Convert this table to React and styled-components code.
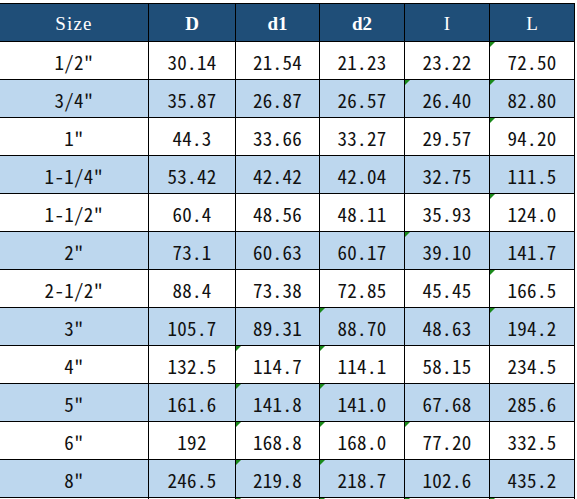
import React from "react";
import styled, { createGlobalStyle } from "styled-components";

const GlobalStyle = createGlobalStyle`
  html, body {
    margin: 0;
    padding: 0;
    background: #ffffff;
  }
  body {
    width: 577px;
    height: 499px;
    overflow: hidden;
  }
`;

const Page = styled.div`
  width: 577px;
  height: 499px;
  padding-top: 3px;
  box-sizing: border-box;
  overflow: hidden;
`;

const Grid = styled.div`
  display: grid;
  grid-template-columns: 148px 86px 83px 84px 84px 84px;
  grid-auto-rows: 37px;
  gap: 1px;
  width: max-content;
  margin-left: -1px;
  border: 1px solid #000;
  background: #000;
`;

const HeadCell = styled.div`
  display: flex;
  align-items: center;
  justify-content: center;
  padding-top: 3px;
  box-sizing: border-box;
  background: #1f4e78;
  color: #ffffff;
  font-family: "Liberation Serif", "Times New Roman", serif;
  font-size: 19px;
  font-weight: ${(p) => (p.bold ? 700 : 400)};
  letter-spacing: ${(p) => (p.wide ? "1.2px" : "0")};
`;

const Cell = styled.div`
  position: relative;
  display: flex;
  align-items: center;
  justify-content: center;
  padding-top: 2px;
  box-sizing: border-box;
  background: ${(p) => (p.shaded ? "#bdd7ee" : "#ffffff")};
  color: #111;
  font-family: "Noto Sans Mono CJK SC", "Liberation Mono", monospace;
  font-size: 19px;
  letter-spacing: 0.3px;

  &::before {
    content: "";
    display: ${(p) => (p.flag ? "block" : "none")};
    position: absolute;
    top: 0;
    left: 0;
    width: 0;
    height: 0;
    border-top: 5px solid #1a8a1a;
    border-right: 5px solid transparent;
  }
`;

const headers = [
  { label: "Size", wide: true },
  { label: "D", bold: true },
  { label: "d1", bold: true },
  { label: "d2", bold: true },
  { label: "I" },
  { label: "L" },
];

// flags = column indexes that carry the green corner marker
const rows = [
  { v: ['1/2"', "30.14", "21.54", "21.23", "23.22", "72.50"], flags: [5] },
  { v: ['3/4"', "35.87", "26.87", "26.57", "26.40", "82.80"], flags: [4, 5] },
  { v: ['1"', "44.3", "33.66", "33.27", "29.57", "94.20"], flags: [5] },
  { v: ['1-1/4"', "53.42", "42.42", "42.04", "32.75", "111.5"], flags: [] },
  { v: ['1-1/2"', "60.4", "48.56", "48.11", "35.93", "124.0"], flags: [5] },
  { v: ['2"', "73.1", "60.63", "60.17", "39.10", "141.7"], flags: [4] },
  { v: ['2-1/2"', "88.4", "73.38", "72.85", "45.45", "166.5"], flags: [5] },
  { v: ['3"', "105.7", "89.31", "88.70", "48.63", "194.2"], flags: [3, 5] },
  { v: ['4"', "132.5", "114.7", "114.1", "58.15", "234.5"], flags: [2, 3] },
  { v: ['5"', "161.6", "141.8", "141.0", "67.68", "285.6"], flags: [2, 3] },
  { v: ['6"', "192", "168.8", "168.0", "77.20", "332.5"], flags: [2, 3, 4] },
  { v: ['8"', "246.5", "219.8", "218.7", "102.6", "435.2"], flags: [2, 3] },
  // next sheet row, only its top edge shows at the bottom of the view
  { v: ["", "", "", "", "", ""], flags: [2, 3, 4, 5], plain: true },
];

const App = () => (
  <Page>
    <GlobalStyle />
    <Grid>
      {headers.map((h) => (
        <HeadCell key={h.label} bold={h.bold} wide={h.wide}>
          {h.label}
        </HeadCell>
      ))}
      {rows.map((r, i) =>
        r.v.map((val, j) => (
          <Cell
            key={`${i}-${j}`}
            shaded={!r.plain && i % 2 === 1}
            flag={r.flags.includes(j)}
          >
            {val}
          </Cell>
        ))
      )}
    </Grid>
  </Page>
);

export default App;
